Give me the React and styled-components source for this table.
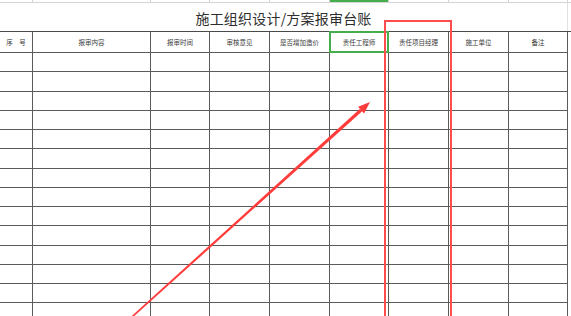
import React from 'react';
import styled, { createGlobalStyle } from 'styled-components';

const GlobalStyle = createGlobalStyle`
  html, body {
    margin: 0;
    padding: 0;
    background: #ffffff;
  }
  body {
    font-family: "Noto Sans CJK SC", "Noto Sans", sans-serif;
  }
`;

const COLUMNS = '33px 118px 59px 60px 60px 59px 60px 60px 59px 1fr';

const HEADERS = [
  '序　号',
  '报审内容',
  '报审时间',
  '审核意见',
  '是否增加造价',
  '责任工程师',
  '责任项目经理',
  '施工单位',
  '备注',
];

const Sheet = styled.div`
  position: relative;
  width: 571px;
  height: 316px;
  overflow: hidden;
  background: #ffffff;
`;

const PrevRow = styled.div`
  display: grid;
  grid-template-columns: ${COLUMNS};
  height: 2px;
  border-bottom: 1px solid #d4d4d4;
`;

const PrevCell = styled.div`
  border-right: 1px solid ${(p) => (p.$last ? 'transparent' : '#d4d4d4')};
  background: ${(p) => (p.$active ? '#46ad4c' : 'transparent')};
`;

const TitleRow = styled.div`
  height: 28px;
  width: 567px;
  display: flex;
  align-items: center;
  justify-content: center;
  border-right: 1px solid #e2e2e2;
`;

const Title = styled.h1`
  margin: 0;
  padding-top: 1px;
  font-family: "Noto Sans CJK SC", sans-serif;
  font-weight: 400;
  font-size: 14px;
  letter-spacing: 0.2px;
  color: #2e2e2e;
`;

const Table = styled.div`
  display: flex;
  flex-direction: column;
  border-top: 1px solid #4a4a4a;
`;

const Row = styled.div`
  display: grid;
  grid-template-columns: ${COLUMNS};
  height: ${(p) => (p.$header ? '21px' : '19.25px')};
  flex-shrink: 0;
`;

const Cell = styled.div`
  position: relative;
  display: flex;
  align-items: center;
  justify-content: center;
  border-right: 1px solid #5a5a5a;
  border-bottom: 1px solid #5a5a5a;
  font-size: 6.5px;
  color: #3a3a3a;
  white-space: nowrap;

  &:last-child {
    border: none;
  }

  ${(p) =>
    p.$selected &&
    `
    &::after {
      content: '';
      position: absolute;
      top: -1px;
      left: -1px;
      right: -1px;
      bottom: -1px;
      border: 2px solid #46ad4c;
    }
  `}
`;

const RedFrame = styled.div`
  position: absolute;
  left: 384px;
  top: 20px;
  width: 64px;
  height: 320px;
  border: 2px solid #ff4d4d;
  pointer-events: none;
`;

const ArrowLayer = styled.svg`
  position: absolute;
  left: 0;
  top: 0;
  pointer-events: none;
`;

const BODY_ROWS = Array.from({ length: 14 }, (_, i) => i);

export default function App() {
  return (
    <>
      <GlobalStyle />
      <Sheet>
        <PrevRow>
          {HEADERS.map((h, i) => (
            <PrevCell key={h} $active={i === 5} />
          ))}
          <PrevCell $last />
        </PrevRow>

        <TitleRow>
          <Title>施工组织设计/方案报审台账</Title>
        </TitleRow>

        <Table>
          <Row $header>
            {HEADERS.map((h, i) => (
              <Cell key={h} $selected={i === 5}>{h}</Cell>
            ))}
            <Cell />
          </Row>
          {BODY_ROWS.map((r) => (
            <Row key={r}>
              {HEADERS.map((h) => (
                <Cell key={h} />
              ))}
              <Cell />
            </Row>
          ))}
        </Table>

        <RedFrame />

        {/* annotation arrow, thin at the tail and thicker near the head */}
        <ArrowLayer width="571" height="316" viewBox="0 0 571 316">
          <polygon
            fill="#ff3c3c"
            points="129.4,318.1 130.6,319.3 362.2,111.2 360.0,108.8"
          />
          <polygon fill="#ff3c3c" points="370,102 364.1,113.4 358.1,106.7" />
        </ArrowLayer>
      </Sheet>
    </>
  );
}
